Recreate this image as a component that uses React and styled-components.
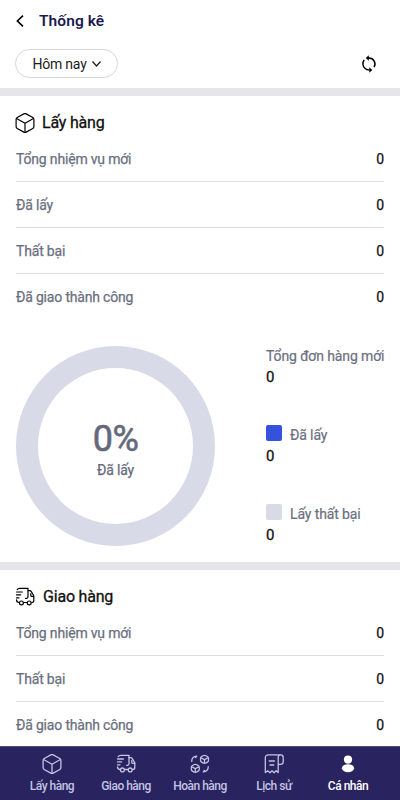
import React from "react";
import styled, { createGlobalStyle } from "styled-components";

const Global = createGlobalStyle`
  *, *::before, *::after { box-sizing: border-box; }
  body { margin: 0; background: #fff; font-family: Roboto, "Liberation Sans", sans-serif; }
`;

const Screen = styled.div`
  width: 400px;
  height: 800px;
  display: flex;
  flex-direction: column;
  overflow: hidden;
  background: #fff;
`;

const Header = styled.header`
  flex: none;
  height: 42px;
  padding: 0 16px;
  display: flex;
  align-items: center;
  gap: 15px;
`;

const Title = styled.h1`
  margin: 0;
  font-size: 15.5px;
  font-weight: 600;
  line-height: 20px;
  letter-spacing: 0.08px;
  color: #1d1a52;
`;

const Toolbar = styled.div`
  flex: none;
  height: 46px;
  padding: 7px 23px 0 15px;
  display: flex;
  align-items: flex-start;
  justify-content: space-between;
`;

const Filter = styled.button`
  width: 103px;
  height: 29px;
  padding: 0;
  border: 1px solid #d5d6dc;
  border-radius: 15px;
  background: #fff;
  display: flex;
  align-items: center;
  justify-content: center;
  gap: 5px;
  font: 400 14px/20px Roboto, sans-serif;
  letter-spacing: -0.2px;
  color: #1c1c20;
`;

const IconButton = styled.button`
  border: 0;
  padding: 0;
  margin: 0;
  background: none;
  display: flex;
  color: #000;
`;

const Refresh = styled(IconButton)`
  margin-top: 6px;
`;

const Content = styled.main`
  flex: 1;
  min-height: 0;
  overflow: hidden;
`;

const Section = styled.section`
  border-top: 8px solid #e5e5ea;
  padding: 13px 16px 0 15px;
`;

const SectionHead = styled.div`
  height: 27px;
  display: flex;
  align-items: center;
  gap: ${(p) => p.$gap}px;
`;

const SectionTitle = styled.h2`
  margin: 0;
  font-size: 16px;
  font-weight: 400;
  -webkit-text-stroke: 0.3px currentColor;
  line-height: 22px;
  letter-spacing: -0.2px;
  color: #111;
`;

const Row = styled.div`
  height: 46px;
  margin-left: 1px;
  padding-top: 1px;
  display: flex;
  align-items: center;
  justify-content: space-between;
  border-bottom: 1px solid ${(p) => (p.$last ? "transparent" : "#dfdfe3")};
  font-size: 14px;
  font-weight: 400;
  -webkit-text-stroke: 0.25px currentColor;
  letter-spacing: -0.18px;
  color: #6b7080;
`;

const Value = styled.span`
  font-size: 14px;
  letter-spacing: 0;
  color: #111;
`;

const Summary = styled.div`
  height: 242px;
  padding: 26px 0 0 1px;
  display: flex;
  justify-content: space-between;
`;

const Donut = styled.div`
  width: 199px;
  height: 200px;
  border: 22px solid #d9dae8;
  border-radius: 50%;
  display: flex;
  flex-direction: column;
  align-items: center;
  padding-top: 51px;
  color: #656a7b;
`;

const Percent = styled.div`
  font-size: 36px;
  line-height: 40px;
  font-weight: 400;
  -webkit-text-stroke: 0.6px currentColor;
  letter-spacing: -0.6px;
`;

const Caption = styled.div`
  margin-top: 2px;
  font-size: 14px;
  line-height: 18px;
  font-weight: 400;
  -webkit-text-stroke: 0.25px currentColor;
  letter-spacing: -0.2px;
`;

const Legend = styled.div`
  width: 118px;
  display: flex;
  flex-direction: column;
`;

const LegendItem = styled.div`
  flex: none;
  height: 79px;
`;

const LegendLabel = styled.div`
  height: 20px;
  display: flex;
  align-items: center;
  gap: 8px;
  font-size: 14px;
  font-weight: 400;
  -webkit-text-stroke: 0.2px currentColor;
  letter-spacing: -0.12px;
  white-space: nowrap;
  color: #6b7080;
`;

const Swatch = styled.span`
  width: 16px;
  height: 16px;
  margin-bottom: 4px;
  border-radius: 2px;
  background: ${(p) => p.$color};
`;

const LegendValue = styled.div`
  height: 22px;
  font-size: 15px;
  line-height: 23px;
  font-weight: 400;
  -webkit-text-stroke: 0.3px currentColor;
  color: #111;
`;

const Nav = styled.nav`
  flex: none;
  height: 54px;
  padding: 0 15px;
  border-top: 1px solid #4f4b7e;
  background: #29235f;
  display: grid;
  grid-template-columns: repeat(5, 1fr);
`;

const NavItem = styled.a`
  display: flex;
  flex-direction: column;
  align-items: center;
  padding-top: 7px;
  gap: 4px;
  font-size: 12px;
  line-height: 16px;
  font-weight: 500;
  letter-spacing: -0.5px;
  white-space: nowrap;
  color: ${(p) => (p.$active ? "#fff" : "#c3c3e3")};
`;

const Icon = ({ size = 20, width = 1.3, children }) => (
  <svg width={size} height={size} viewBox="0 0 20 20" fill="none" stroke="currentColor"
    strokeWidth={width} strokeLinecap="round" strokeLinejoin="round">{children}</svg>
);

const BoxIcon = (p) => (
  <Icon {...p}>
    <path d="M8.8.9Q10 .3 11.2.9L17.8 4.5Q18.9 5.1 18.9 6.4V13.6Q18.9 14.9 17.8 15.5L11.2 19.1Q10 19.7 8.8 19.1L2.2 15.5Q1.1 14.9 1.1 13.6V6.4Q1.1 5.1 2.2 4.5Z" />
    <path d="M1.6 5.5 10 10.2 18.4 5.5M10 10.2V19.2" />
  </Icon>
);

const TruckIcon = (p) => (
  <Icon {...p}>
    <path d="M2.2 2.6Q3 1.3 4.7 1.3H13V9.8Q13 11.3 11.5 11.3H10.5" />
    <path d="M13 3.7H14.7Q15.8 3.7 16.3 4.6L18.8 8.8V13.4Q18.8 15.5 16.7 15.5" />
    <path d="M18.6 9.4H17Q15.8 9.4 15.8 8.4V6.5" />
    <path d="M1.5 5H7.4M1.5 7.9H5.6M1.5 10.8H4M1.5 12.8Q1.5 15.5 4.1 15.5M8.7 15.5H11.7" />
    <circle cx="6.4" cy="15.9" r="1.9" /><circle cx="14.2" cy="15.9" r="1.9" />
  </Icon>
);

const ReturnIcon = (p) => (
  <Icon {...p}>
    <path d="M13 1.7Q14.5.9 16 1.7L17.4 2.5Q18.5 3.1 18.5 4.5V6.3Q18.5 7.5 17.4 8.1L16 8.9Q14.5 9.7 13 8.9L11.6 8.1Q10.5 7.5 10.5 6.3V4.5Q10.5 3.1 11.6 2.5ZM11.8 4.1 14.5 5.7 17.2 4.1M14.5 5.7V8.4" />
    <path d="M3.8 10.7Q5.3 9.9 6.8 10.7L8.2 11.5Q9.3 12.1 9.3 13.5V15.3Q9.3 16.5 8.2 17.1L6.8 17.9Q5.3 18.7 3.8 17.9L2.4 17.1Q1.3 16.5 1.3 15.3V13.5Q1.3 12.1 2.4 11.5ZM2.6 13.1 5.3 14.7 8 13.1M5.3 14.7V17.4" />
    <path d="M1.7 7.4Q1.7 2.4 6.7 2.1L5.6 3.6M18.3 12.6Q18.3 17.6 13.3 17.9L14.4 16.4" />
  </Icon>
);

const ReceiptIcon = (p) => (
  <Icon {...p}>
    <path d="M16.5.8H4.5Q1.3.8 1.3 4V18.6L3.7 16.8 5.9 18.8 8 16.8 10.1 18.8 12.1 16.8 14.2 18.6V3.4Q14.2.8 16.7.8 19.2.8 19.2 3.4V7.8Q19.2 10.4 16.5 10.4H14.2" />
    <path d="M5.2 7H10.4M6 11H9.8" />
  </Icon>
);

const PersonIcon = () => (
  <svg width="20" height="20" viewBox="0 0 20 20" fill="currentColor">
    <circle cx="10" cy="5.6" r="4.1" /><ellipse cx="10" cy="14.2" rx="6.1" ry="4" />
  </svg>
);

const SyncIcon = () => (
  <svg width="16" height="18" viewBox="0 0 16 18" fill="none" stroke="currentColor" strokeWidth="1.5">
    <path d="M3.9 13.2A6 6 0 0 1 3.2 5M6.5 3H8a6 6 0 0 1 5.1 9.1M3.9 13.2Q5.6 15 8.5 15" />
    <path d="M7.8.3V5.7L4.8 3ZM8.3 12.3V17.7L11.3 15Z" fill="currentColor" stroke="none" />
  </svg>
);

const Rows = ({ labels }) => labels.map((label, i) => (
  <Row key={label} $last={i === labels.length - 1}><span>{label}</span><Value>0</Value></Row>
));

const tabs = [
  ["Lấy hàng", BoxIcon], ["Giao hàng", TruckIcon], ["Hoàn hàng", ReturnIcon],
  ["Lịch sử", ReceiptIcon], ["Cá nhân", PersonIcon],
];

export default function App() {
  return (
    <Screen>
      <Global />
      <Header>
        <IconButton aria-label="Quay lại">
          <svg width="8" height="12" viewBox="0 0 8 12" fill="none" stroke="currentColor" strokeWidth="1.6"><path d="M7 .7 1.4 6 7 11.3" /></svg>
        </IconButton>
        <Title>Thống kê</Title>
      </Header>
      <Toolbar>
        <Filter>Hôm nay
          <svg width="9" height="6" viewBox="0 0 9 6" fill="none" stroke="currentColor" strokeWidth="1.2"><path d="M.5.5 4.5 5 8.5.5" /></svg>
        </Filter>
        <Refresh aria-label="Làm mới"><SyncIcon /></Refresh>
      </Toolbar>
      <Content>
        <Section>
          <SectionHead $gap={7}><BoxIcon width={1.2} /><SectionTitle>Lấy hàng</SectionTitle></SectionHead>
          <Rows labels={["Tổng nhiệm vụ mới", "Đã lấy", "Thất bại", "Đã giao thành công"]} />
          <Summary>
            <Donut><Percent>0%</Percent><Caption>Đã lấy</Caption></Donut>
            <Legend>
              <LegendItem><LegendLabel>Tổng đơn hàng mới</LegendLabel><LegendValue>0</LegendValue></LegendItem>
              <LegendItem><LegendLabel><Swatch $color="#3353df" />Đã lấy</LegendLabel><LegendValue>0</LegendValue></LegendItem>
              <LegendItem><LegendLabel><Swatch $color="#d9dae8" />Lấy thất bại</LegendLabel><LegendValue>0</LegendValue></LegendItem>
            </Legend>
          </Summary>
        </Section>
        <Section>
          <SectionHead $gap={8}><TruckIcon width={1.2} /><SectionTitle>Giao hàng</SectionTitle></SectionHead>
          <Rows labels={["Tổng nhiệm vụ mới", "Thất bại", "Đã giao thành công"]} />
        </Section>
      </Content>
      <Nav>
        {tabs.map(([label, Glyph], i) => (
          <NavItem key={label} $active={i === 4}><Glyph />{label}</NavItem>
        ))}
      </Nav>
    </Screen>
  );
}
